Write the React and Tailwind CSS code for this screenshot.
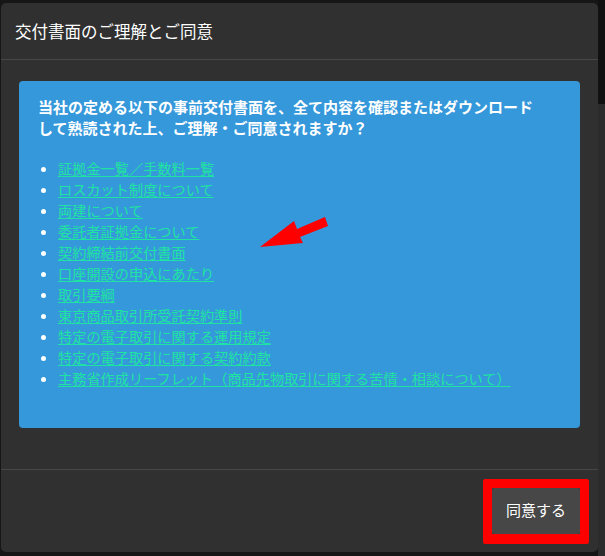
const docs = [
  "証拠金一覧／手数料一覧",
  "ロスカット制度について",
  "両建について",
  "委託者証拠金について",
  "契約締結前交付書面",
  "口座開設の申込にあたり",
  "取引要綱",
  "東京商品取引所受託契約準則",
  "特定の電子取引に関する運用規定",
  "特定の電子取引に関する契約約款",
  "主務省作成リーフレット（商品先物取引に関する苦情・相談について）",
];

const jp = { fontFamily: '"Noto Sans CJK JP", "Noto Sans", sans-serif' };

export default function App() {
  return (
    <div className="w-[605px] h-[556px] bg-[#161616] flex overflow-hidden" style={jp}>
      {/* Modal */}
      <div className="ml-[1px] mt-[3px] w-[597px] h-[549px] rounded-[5px] bg-[#303030] flex flex-col shrink-0">
        <div className="h-[57px] px-[14px] flex items-center border-b border-[#474747]">
          <h1 className="text-[16.5px] text-white leading-none">交付書面のご理解とご同意</h1>
        </div>

        <div className="px-[18px] pt-[21px] pb-[41px] border-b border-[#474747]">
          <div className="relative h-[347px] rounded-[4px] bg-[#3598db] pl-[19px] pr-[16px] pt-[15px]">
            <p className="text-[15px] font-bold text-white leading-[21px]">
              当社の定める以下の事前交付書面を、全て内容を確認またはダウンロード
              <br />
              して熟読された上、ご理解・ご同意されますか？
            </p>
            <ul className="mt-[20px] list-disc pl-[20px] text-white">
              {docs.map((d) => (
                <li key={d} className="text-[14.2px] leading-[21px]">
                  <a className="text-[#1fe3a2] underline underline-offset-[2px] cursor-pointer">{d}</a>
                </li>
              ))}
            </ul>

            {/* red annotation arrow */}
            <svg
              className="absolute left-[221px] top-[129px]"
              width="95"
              height="45"
              viewBox="0 0 95 45"
            >
              <polygon points="20,37 54,11 57,19 85,7 88,16 60,27 63,33" fill="#ff0000" />
            </svg>
          </div>
        </div>

        <div className="flex-1 flex items-center justify-end pr-[9px]">
          <div className="border-[9px] border-b-[10px] border-[#ff0000] rounded-[2px]">
            <button className="w-[88px] h-[46px] bg-[#474747] rounded-[2px] text-[15px] text-white">
              同意する
            </button>
          </div>
        </div>
      </div>

      {/* page behind the overlay */}
      <div className="flex-1 flex flex-col">
        <div className="h-[104px] bg-[#111111]" />
        <div className="flex-1 bg-[#2c2c2c]" />
      </div>
    </div>
  );
}
